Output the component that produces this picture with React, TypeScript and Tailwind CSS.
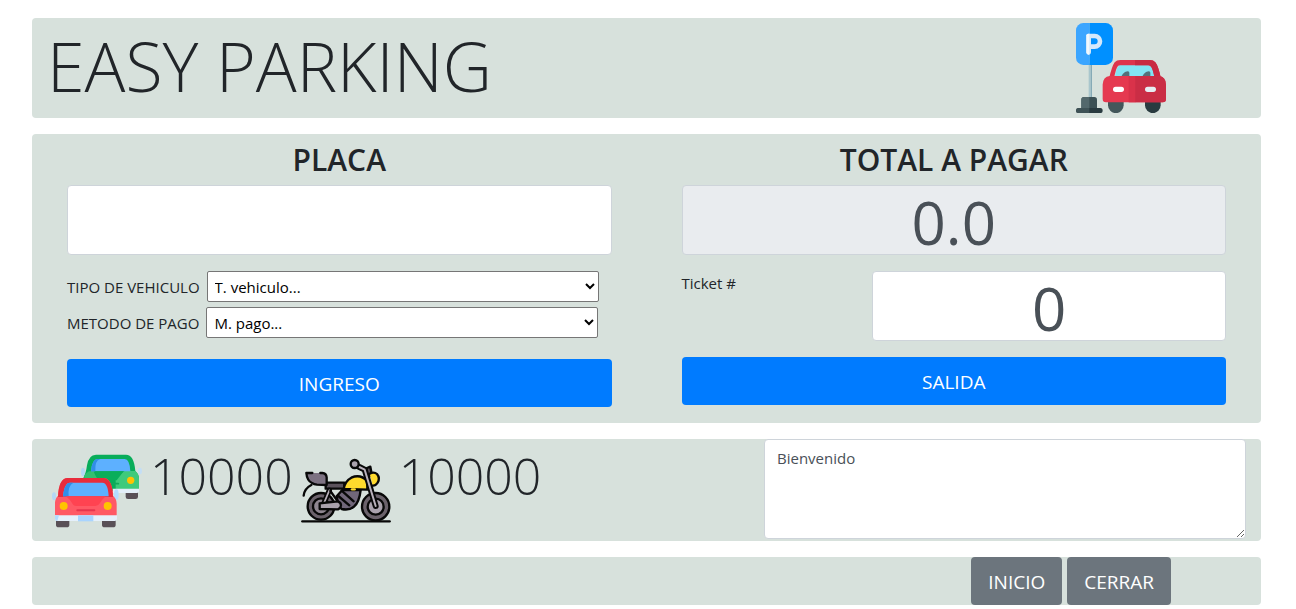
import type { ReactNode } from "react";

function ParkingIcon() {
  return (
    <svg viewBox="48 39 270 270" className="size-[90px] shrink-0" role="img" aria-label="Parking">
      <rect x="86" y="160" width="6" height="106" fill="#a9c6cd" />
      <rect x="92" y="160" width="4" height="106" fill="#86aab6" />
      <path d="M104 39h33a22 22 0 0 1 22 22v82a22 22 0 0 1-22 22H88V39z" fill="#0090ff" />
      <path d="M88 39H70a22 22 0 0 0-22 22v82a22 22 0 0 0 22 22h18z" fill="#3ba5ff" />
      <path d="M86 127V78h18a16 16 0 0 1 0 32H88" fill="none" stroke="#d3e8fb" strokeWidth="14" strokeLinecap="round" strokeLinejoin="round" />
      <path d="M79 127V76q0-5 5-5h4v63h-2q-7 0-7-7z" fill="#f2f8fd" />
      <path d="M64 296v-27q0-8 8-8h31q8 0 8 8v27z" fill="#3c5155" />
      <path d="M64 296v-27q0-8 8-8h16v35z" fill="#53686c" />
      <path d="M55 294h66q7 0 7 8t-7 7H55q-7 0-7-7t7-8z" fill="#293b40" />
      <path d="M55 294h33v15H55q-7 0-7-7t7-8z" fill="#3e5256" />
      <path d="M144 272h47v14a23 23 0 0 1-47 0z" fill="#43575b" />
      <path d="M255 272h47v14a23 23 0 0 1-47 0z" fill="#293b40" />
      <path d="M164 204q6-40 20-41h82q14 1 20 41z" fill="#82e4f4" />
      <path d="M183 201q2-8 12-15 13-6 13 2v13zM246 201q2-8 12-15 13-6 13 2v13z" fill="#53717b" />
      <path d="M147 206q9-38 17-49 6-7 17-7h88q11 0 17 7 9 11 17 49h-19q-6-34-13-38-2-2-6-2h-84q-5 0-7 2-6 5-12 38z" fill="#de344c" />
      <path d="M225 150h44q11 0 17 7 9 11 17 49h-19q-6-34-13-38-2-2-6-2h-40z" fill="#c92a42" />
      <path d="M149 198h148q20 2 21 26v43q0 10-10 10H138q-10 0-10-10v-43q1-24 21-26z" fill="#e53950" />
      <path d="M225 198h72q20 2 21 26v43q0 10-10 10h-83z" fill="#ca2d45" />
      <path d="M206 198h20v79h-20z" fill="#d9324a" />
      <rect x="159" y="230" width="33" height="16" rx="8" fill="#fff" />
      <rect x="255" y="230" width="33" height="16" rx="8" fill="#e5edf2" />
    </svg>
  );
}

function CarsIcon() {
  return (
    <svg viewBox="66 18 270 270" className="size-[90px] shrink-0" role="img" aria-label="Carros">
      <ellipse cx="159" cy="96" rx="6" ry="13" fill="#b4d7f5" />
      <ellipse cx="330" cy="93" rx="6" ry="10" fill="#c4def5" />
      <rect x="287" y="148" width="37" height="29" rx="7" fill="#595057" />
      <path d="M160 114q8-14 11-38 5-32 27-32h90q24 0 28 49 11 9 11 24v36H160z" fill="#08ad5a" />
      <path d="M284 93h32q11 9 11 24v32h-70v-37z" fill="#3fca7b" />
      <path d="M163 106q6-8 14-12h14q6 18 15 26h-43z" fill="#32bf70" />
      <path d="M183 94q3-37 20-37h81q15 0 17 37z" fill="#5db0ff" />
      <path d="M183 94q3-37 20-37h8q-17 4-15 37z" fill="#318ee8" />
      <path d="M194 94h87l-21 27h-47z" fill="#0aae5a" />
      <path d="M240 131h25" stroke="#12a95a" strokeWidth="5" strokeLinecap="round" />
      <circle cx="302" cy="121" r="11" fill="#ffc400" />
      <path d="M248 146h79v7q0 6-6 6h-73z" fill="#e3eef8" />
      <ellipse cx="72" cy="169" rx="6" ry="12" fill="#b4d7f5" />
      <ellipse cx="259" cy="164" rx="7" ry="16" fill="#b4dcff" />
      <rect x="78" y="231" width="40" height="31" rx="8" fill="#595057" />
      <rect x="216" y="231" width="41" height="31" rx="8" fill="#595057" />
      <path d="M75 231v-42q0-14 9-22 4-53 29-53h107q26 0 29 53 11 9 11 24v40z" fill="#ff5965" />
      <path d="M84 171q2-57 29-57h107q27 0 29 57z" fill="#e82c3c" />
      <path d="M99 169q4-41 21-41h97q17 0 19 41z" fill="#5db0ff" />
      <path d="M99 169q4-41 21-41h10q-17 9-14 41z" fill="#318ee8" />
      <path d="M108 169h119q-12 11-17 20-5 9-14 9h-57q-9 0-13-9-5-9-18-20z" fill="#ff4351" />
      <path d="M142 211h51" stroke="#e7354d" strokeWidth="6" strokeLinecap="round" />
      <circle cx="101" cy="198" r="12" fill="#ffc400" />
      <circle cx="233" cy="198" r="12" fill="#ffc400" />
      <path d="M75 226h186v10q0 7-7 7H82q-7 0-7-7z" fill="#e5f0fb" />
      <path d="M144 226h46v18h-46z" fill="#a9d4ff" />
      <path d="M75 226h12l-5 17q-7 0-7-7z" fill="#b4dcff" />
    </svg>
  );
}

function MotorcycleIcon() {
  return (
    <svg viewBox="33 18 270 270" className="size-[90px] shrink-0" role="img" aria-label="Motos" fill="none" stroke="#080808" strokeWidth="7" strokeLinecap="round" strokeLinejoin="round">
      <path d="M37 244h262" />
      <circle cx="93" cy="199" r="40" fill="#6b626b" />
      <circle cx="93" cy="199" r="24" fill="#8f8690" />
      <circle cx="257" cy="200" r="41" fill="#6b626b" />
      <circle cx="257" cy="200" r="24" fill="#aaa2ad" />
      <path d="M64 135q-21 11-23 32" />
      <path d="M107 128h56v18h-56z" fill="#5b525c" />
      <path d="M118 151l-18 43" strokeWidth="16" />
      <path d="M118 151l-18 43" stroke="#b9b1bb" strokeWidth="5" />
      <path d="M121 153l31 43" />
      <path d="M140 169l17-19h55q-4 36-20 50-14 12-37 7l-9-9z" fill="#71677a" />
      <path d="M155 152l36 32M145 168l33 28" />
      <path d="M144 184l-55 6v17l55 1q9-4 9-12t-9-12z" fill="#aaa2ad" />
      <path d="M109 102q-3-3-8-3H49q2 23 17 30 6 4 15 5l29 1V112q0-6-1-10z" fill="#7d7282" stroke="none" />
      <path d="M67 99H49q2 23 17 30 6 4 15 5l29 1V112q-1-12-13-13h-6" />
      <path d="M161 147q4-24 23-34 28-12 48 11v25z" fill="#ffda2d" />
      <path d="M186 148h8" stroke="#ffda2d" />
      <path d="M226 98l5-14 10-4 3 16-5 13z" fill="#544b55" />
      <path d="M239 101q13-7 22 1 10 12 2 26-7 10-15 9" fill="#ffda2d" />
      <path d="M208 81l16 8 33 109" strokeWidth="18" />
      <path d="M208 81l16 8 33 109" stroke="#b9b1bb" strokeWidth="6" />
      <circle cx="194" cy="72" r="12" fill="#aaa2ad" />
    </svg>
  );
}

function Panel({ children, className = "" }: { children: ReactNode; className?: string }) {
  return <section className={`rounded bg-[#d7e1dc] ${className}`}>{children}</section>;
}

const heading = "mb-2 pt-1 text-center text-[30px] leading-[34px] font-semibold";
const bigField =
  "h-[70px] rounded border border-[#ced4da] px-3 pt-1 text-center text-[60px] leading-[64px] text-[#495057]";
const primaryButton = "h-12 w-full rounded bg-[#007bff] pt-0.5 text-[19px] text-white hover:bg-[#0069d9]";
const secondaryButton = "h-12 rounded bg-[#6c757d] px-[17px] pt-0.5 text-[19px] text-white hover:bg-[#5a6268]";
const selectField = "h-[31px] w-[72%] rounded-xs border border-[#767676] bg-white px-[3px] text-black";

export default function App() {
  return (
    <main className="flex flex-col gap-4 bg-white pt-[18px] pr-[35px] pb-1 pl-8 font-['Open_Sans','Noto_Sans',sans-serif] text-[15px] leading-6 text-[#212529]">
      <Panel className="flex h-[100px] items-center justify-between pr-[95px] pl-[15px]">
        <h1 className="pb-1 text-[68px] leading-[84px] font-light">EASY PARKING</h1>
        <ParkingIcon />
      </Panel>

      <Panel className="grid grid-cols-2 pt-[5px] pb-4">
        <form className="px-[35px]" onSubmit={(e) => e.preventDefault()}>
          <h2 className={heading}>
            <label htmlFor="placa">PLACA</label>
          </h2>
          <input id="placa" className={`${bigField} block w-full bg-white`} />
          <div className="mt-4 flex items-center gap-[7px]">
            <label htmlFor="tipo" className="whitespace-nowrap">TIPO DE VEHICULO</label>
            <select id="tipo" className={selectField}>
              <option>T. vehiculo...</option>
            </select>
          </div>
          <div className="mt-[5px] flex items-center gap-[7px]">
            <label htmlFor="metodo" className="whitespace-nowrap">METODO DE PAGO</label>
            <select id="metodo" className={selectField}>
              <option>M. pago...</option>
            </select>
          </div>
          <button type="submit" className={`${primaryButton} mt-[21px]`}>INGRESO</button>
        </form>

        <form className="px-[35px]" onSubmit={(e) => e.preventDefault()}>
          <h2 className={heading}>
            <label htmlFor="total">TOTAL A PAGAR</label>
          </h2>
          <input id="total" readOnly defaultValue="0.0" className={`${bigField} block w-full bg-[#e9ecef]`} />
          <div className="mt-4 flex justify-between">
            <label htmlFor="ticket">Ticket #</label>
            <input id="ticket" defaultValue="0" className={`${bigField} w-[65%] bg-white`} />
          </div>
          <button type="submit" className={`${primaryButton} mt-4`}>SALIDA</button>
        </form>
      </Panel>

      <Panel className="flex h-[102px] items-start justify-between pr-[15px] pl-5">
        <div className="flex items-start gap-2 pt-[7px] text-[50px] leading-[60px] font-light">
          <CarsIcon />
          <span>10000</span>
          <MotorcycleIcon />
          <span>10000</span>
        </div>
        <textarea
          aria-label="Mensaje"
          defaultValue="Bienvenido"
          className="h-[100px] w-[482px] rounded border border-[#ced4da] bg-white px-3 py-1.5 text-[#495057]"
        />
      </Panel>

      <Panel className="flex justify-end gap-[5px] pr-[90px]">
        <button type="button" className={secondaryButton}>INICIO</button>
        <button type="button" className={secondaryButton}>CERRAR</button>
      </Panel>
    </main>
  );
}
